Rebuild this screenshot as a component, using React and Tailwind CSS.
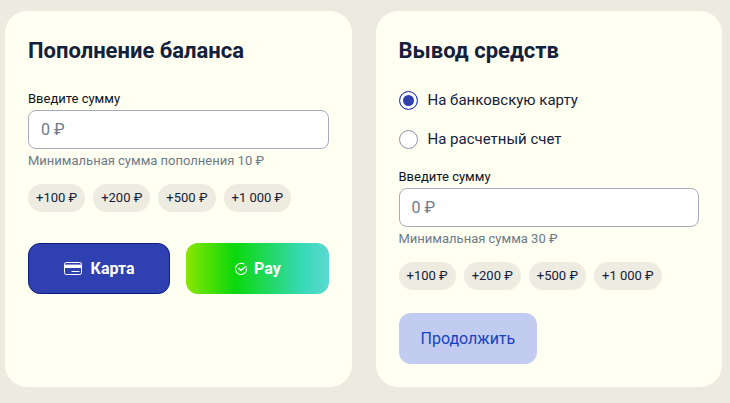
import { useState } from "react"

const AMOUNTS = [100, 200, 500, 1000]

const formatAmount = (value) => String(value).replace(/\B(?=(\d{3})+$)/g, " ")

function CardIcon() {
  return (
    <svg className="w-[18px] h-[14px]" viewBox="0 0 18 14" fill="none" aria-hidden="true">
      <rect x="0.5" y="0.5" width="17" height="12" rx="1.8" stroke="currentColor" />
      <path d="M1 2.6h16V6H1z" fill="currentColor" />
      <path d="M7.5 9.5h8" stroke="currentColor" />
    </svg>
  )
}

function PayIcon() {
  return (
    <svg className="w-[14px] h-[14px]" viewBox="0 0 14 14" fill="none" stroke="currentColor" strokeWidth="1.1" aria-hidden="true">
      <path d="M10.4 2.4A5.6 5.6 0 1 0 12.6 6.2" />
      <path d="M4.2 6l2.7 2.3 5.6-4.3" strokeWidth="1.4" />
    </svg>
  )
}

function Panel({ title, children }) {
  return (
    <section className="rounded-[22px] bg-[#fffff2] px-[23px] pt-6 pb-[23px]">
      <h2 className="mb-[22px] text-[22px] leading-8 font-bold text-[#14213d]">{title}</h2>
      {children}
    </section>
  )
}

function AmountField({ id, hint }) {
  const [amount, setAmount] = useState("")

  return (
    <div>
      <label htmlFor={id} className="block mb-[2px] text-[13px] leading-[19px] text-[#0b1220]">
        Введите сумму
      </label>
      <input
        id={id}
        type="text"
        inputMode="numeric"
        placeholder="0 ₽"
        value={amount}
        onChange={(e) => setAmount(e.target.value)}
        className="block w-full h-[39px] px-3 rounded-lg border border-[#a5abbb] bg-white text-base text-[#14213d] placeholder:text-[#6c7a89] outline-none focus:border-[#2f40b0]"
      />
      <p className="text-[13px] leading-6 text-[#6c7a89]">{hint}</p>
      <div className="flex flex-wrap gap-2 mt-[11px]">
        {AMOUNTS.map((value) => (
          <button
            key={value}
            type="button"
            onClick={() => setAmount(String(value))}
            className="h-7 px-2 rounded-full bg-[#eeece1] text-[13px] text-[#14213d] whitespace-nowrap"
          >
            +{formatAmount(value)} ₽
          </button>
        ))}
      </div>
    </div>
  )
}

function RadioOption({ value, checked, onChange, children }) {
  return (
    <label className="flex items-center gap-[10px] text-[15px] leading-[22px] text-[#14213d]">
      <input
        type="radio"
        name="destination"
        value={value}
        checked={checked}
        onChange={() => onChange(value)}
        className="appearance-none shrink-0 size-[19px] rounded-full border border-[#8e93a8] bg-white checked:border-[#2f40b0] checked:bg-[#2f40b0] checked:shadow-[inset_0_0_0_3px_#ffffff]"
      />
      {children}
    </label>
  )
}

export default function App() {
  const [destination, setDestination] = useState("card")

  return (
    <main className="min-h-screen bg-[#edebe0] pt-[11px] pb-4 pl-[5px] pr-2 font-['Roboto','Liberation_Sans',sans-serif]">
      <div className="grid grid-cols-2 gap-6">
        <Panel title="Пополнение баланса">
          <AmountField id="deposit-amount" hint="Минимальная сумма пополнения 10 ₽" />
          <div className="grid grid-cols-2 gap-4 mt-[31px]">
            <button
              type="button"
              className="flex items-center justify-center gap-[9px] h-[51px] rounded-xl border border-[#0d1c80] bg-[#2f40b0] text-base font-bold text-white"
            >
              <CardIcon />
              Карта
            </button>
            <button
              type="button"
              className="flex items-center justify-center gap-[6px] h-[51px] rounded-xl bg-[linear-gradient(90deg,#8be600_0%,#0bd80b_34%,#38d9b8_82%,#5bd9d2_100%)] text-base font-bold text-white"
            >
              <PayIcon />
              Pay
            </button>
          </div>
        </Panel>

        <Panel title="Вывод средств">
          <div className="flex flex-col gap-[17px] mb-[17px]">
            <RadioOption value="card" checked={destination === "card"} onChange={setDestination}>
              На банковскую карту
            </RadioOption>
            <RadioOption value="account" checked={destination === "account"} onChange={setDestination}>
              На расчетный счет
            </RadioOption>
          </div>
          <AmountField id="withdraw-amount" hint="Минимальная сумма 30 ₽" />
          <button type="button" disabled className="mt-[23px] h-[51px] px-[22px] rounded-xl bg-[#c2cbf0] text-base text-[#1743c0]">
            Продолжить
          </button>
        </Panel>
      </div>
    </main>
  )
}
